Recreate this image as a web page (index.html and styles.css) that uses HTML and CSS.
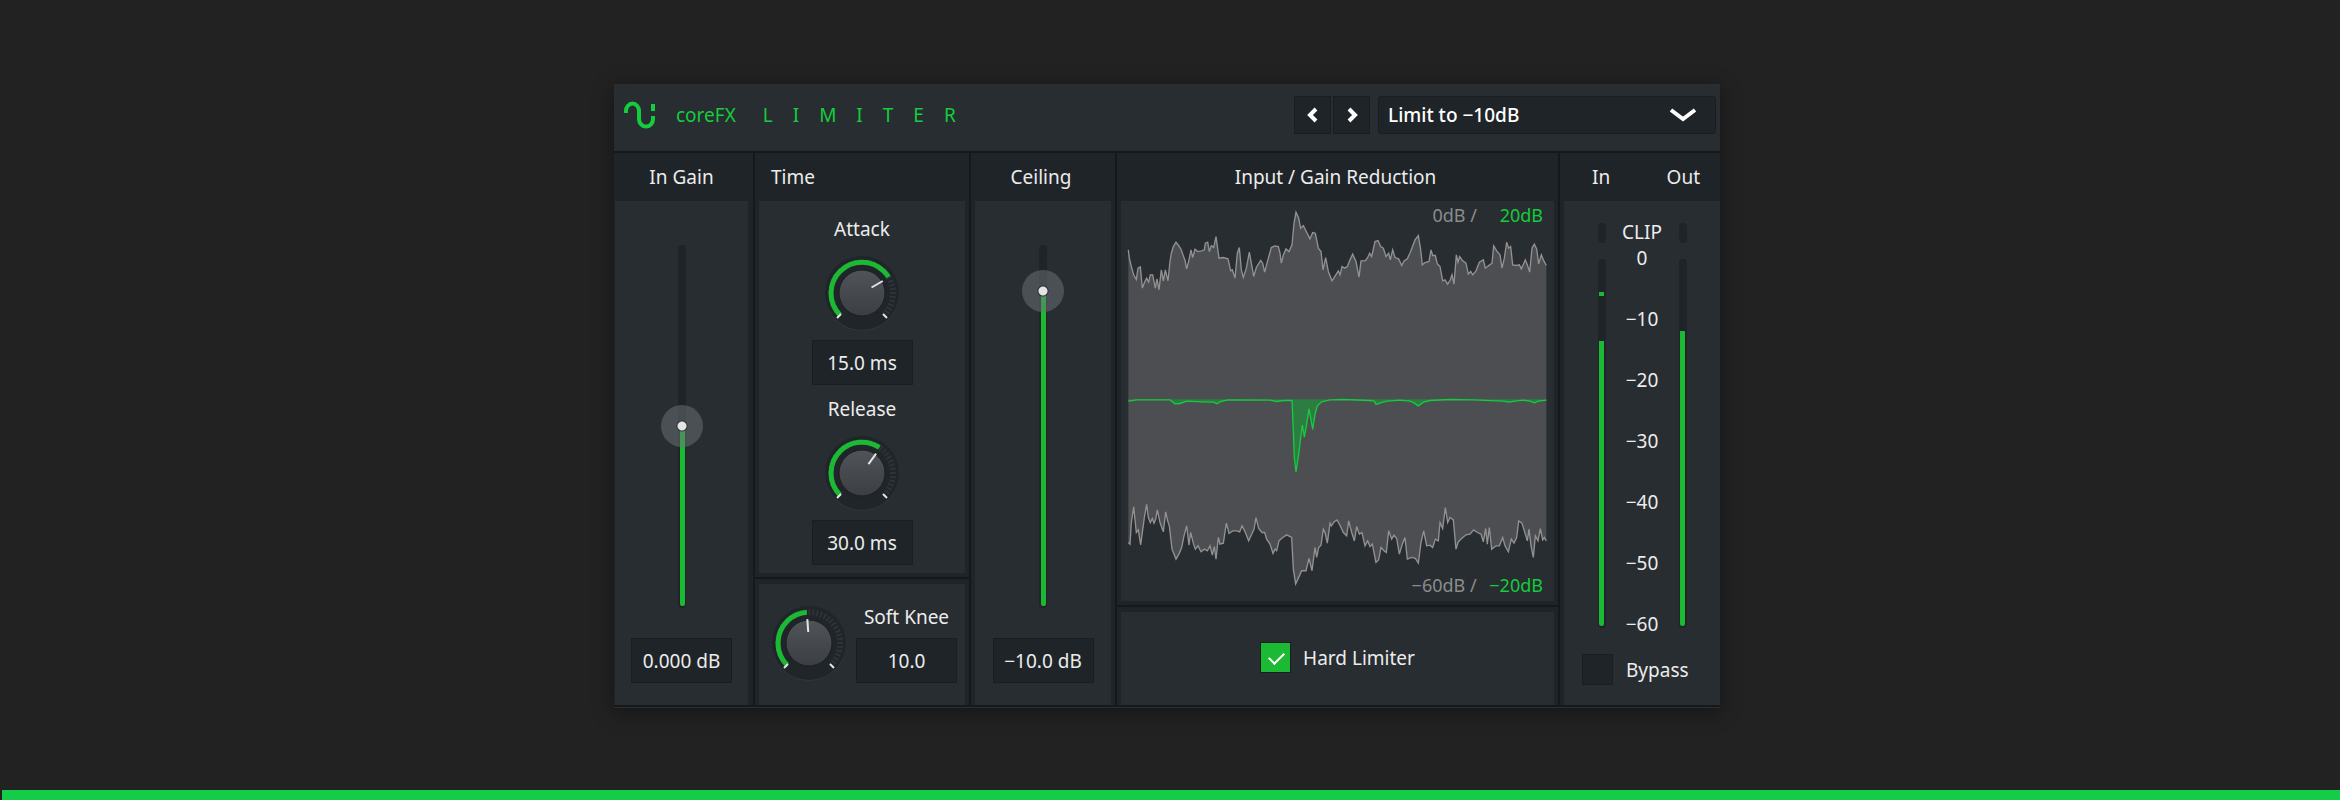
FILE: index.html
```html
<!DOCTYPE html>
<html lang="en">
  <head>
    <meta charset="UTF-8" />
    <meta name="viewport" content="width=device-width, initial-scale=1.0" />
    <title>coreFX Limiter</title>
    <link rel="stylesheet" href="styles.css">
  </head>
  <body>
    <main class="stage">
      <div class="plugin">
        <header class="topbar">
          <svg class="logo" viewBox="0 0 32 28" width="32" height="28">
            <path d="M2 12V10a6.500 7.500 0 0 1 13 0V18a7 7.500 0 0 0 14 0V15M29 3V10" />
          </svg>
          <h1 class="brand">coreFX <span class="brand-name">LIMITER</span></h1>
          <div class="presets">
            <button type="button" class="step" aria-label="Previous preset">
              <svg viewBox="0 0 12 16" width="12" height="16"><path d="M9 2L3 8l6 6" /></svg>
            </button>
            <button type="button" class="step" aria-label="Next preset">
              <svg viewBox="0 0 12 16" width="12" height="16"><path d="M3 2l6 6-6 6" /></svg>
            </button>
            <div class="preset-select">
              <select aria-label="Preset">
                <option>Limit to −10dB</option>
              </select>
              <svg viewBox="0 0 28 14" width="28" height="14"><path d="M2 2l12 9L26 2" /></svg>
            </div>
          </div>
        </header>

        <div class="columns">
          <!-- In Gain -->
          <section class="column">
            <h2 class="column-title"><label for="gain">In Gain</label></h2>
            <div class="pane fader">
              <input type="range" id="gain" class="fader-slider" min="-24" max="24" step="any" value="0" style="--fill: 50%" />
              <input type="text" class="value" aria-label="In Gain value" value="0.000 dB" />
            </div>
          </section>

          <!-- Time -->
          <section class="column">
            <h2 class="column-title column-title-left">Time</h2>
            <div class="pane times">
              <label for="attack">Attack</label>
              <div class="knob">
                <svg viewBox="-38 -38 76 76" width="76" height="76">
                  <defs>
                    <linearGradient id="cap" x1="0" y1="0" x2="0" y2="1">
                      <stop offset="0" stop-color="#505458" />
                      <stop offset="1" stop-color="#3b3f43" />
                    </linearGradient>
                  </defs>
                  <circle class="knob-lip" cy="1" r="37" />
                  <circle class="knob-well" r="37" />
                  <path class="knob-rest" d="M-22 22A31 31 0 1 1 22 22" />
                  <path class="knob-arc" pathLength="270" stroke-dasharray="194 400" d="M-22 22A31 31 0 1 1 22 22" />
                  <circle class="knob-cap" r="23" />
                  <path class="knob-tick" d="M-21 21l-4 4M21 21l4 4" />
                  <path class="knob-pointer" transform="rotate(60)" d="M0-11V-24" />
                </svg>
                <input type="range" id="attack" min="0" max="20.8" step="any" value="15" />
              </div>
              <input type="text" class="value" aria-label="Attack value" value="15.0 ms" />
              <label for="release" class="times-second">Release</label>
              <div class="knob">
                <svg viewBox="-38 -38 76 76" width="76" height="76">
                  <circle class="knob-lip" cy="1" r="37" />
                  <circle class="knob-well" r="37" />
                  <path class="knob-rest" d="M-22 22A31 31 0 1 1 22 22" />
                  <path class="knob-arc" pathLength="270" stroke-dasharray="169 400" d="M-22 22A31 31 0 1 1 22 22" />
                  <circle class="knob-cap" r="23" />
                  <path class="knob-tick" d="M-21 21l-4 4M21 21l4 4" />
                  <path class="knob-pointer" transform="rotate(36)" d="M0-11V-24" />
                </svg>
                <input type="range" id="release" min="0" max="48" step="any" value="30" />
              </div>
              <input type="text" class="value" aria-label="Release value" value="30.0 ms" />
            </div>
            <div class="pane knee">
              <div class="knob">
                <svg viewBox="-38 -38 76 76" width="76" height="76">
                  <circle class="knob-lip" cy="1" r="37" />
                  <circle class="knob-well" r="37" />
                  <path class="knob-rest" d="M-22 22A31 31 0 1 1 22 22" />
                  <path class="knob-arc" pathLength="270" stroke-dasharray="131 400" d="M-22 22A31 31 0 1 1 22 22" />
                  <circle class="knob-cap" r="23" />
                  <path class="knob-tick" d="M-21 21l-4 4M21 21l4 4" />
                  <path class="knob-pointer" transform="rotate(-4)" d="M0-11V-24" />
                </svg>
                <input type="range" id="knee" min="0" max="20.6" step="any" value="10" />
              </div>
              <div class="knee-value">
                <label for="knee">Soft Knee</label>
                <input type="text" class="value" aria-label="Soft Knee value" value="10.0" />
              </div>
            </div>
          </section>

          <!-- Ceiling -->
          <section class="column">
            <h2 class="column-title"><label for="ceiling">Ceiling</label></h2>
            <div class="pane fader">
              <input type="range" id="ceiling" class="fader-slider" min="-60" max="-6" step="any" value="-10" style="--fill: 87%" />
              <input type="text" class="value" aria-label="Ceiling value" value="−10.0 dB" />
            </div>
          </section>

          <!-- Graph -->
          <section class="column">
            <h2 class="column-title">Input / Gain Reduction</h2>
            <div class="pane graph">
              <svg class="wave" viewBox="33 18 1299 1203" preserveAspectRatio="none">
                <path class="wave-fill" d="M55 165L58 190 64 215 71 240 79 254 84 220 91 216 97 280 104 262 110 250 116 262 121 240 128 240 136 280 141 252 147 285 154 225 160 258 166 225 174 258 180 200 184 175 190 155 198 142 206 152 213 163 219 180 225 197 230 222 237 195 243 165 248 188 255 163 263 170 275 168 283 165 286 145 293 142 298 170 304 152 311 158 318 125 327 190 340 188 354 192 362 228 367 225 375 250 382 175 388 158 394 225 400 248 409 220 418 172 424 205 431 245 439 218 452 197 458 205 464 232 475 190 484 158 494 153 505 155 510 175 514 205 520 180 528 162 537 170 546 150 552 85 558 52 566 70 572 100 580 92 590 112 600 132 608 113 616 115 625 160 633 170 639 225 647 188 655 230 666 258 675 244 685 228 690 240 696 215 704 220 712 215 720 195 728 178 738 200 747 247 753 198 765 198 772 190 779 175 785 185 795 140 804 137 812 155 820 160 828 185 836 175 841 195 848 165 855 188 866 192 875 212 882 198 892 192 901 172 915 135 925 122 932 165 937 210 945 203 957 200 963 165 968 182 976 182 982 207 990 215 998 258 1005 255 1013 268 1021 255 1026 240 1032 268 1039 180 1044 202 1049 185 1058 198 1068 205 1075 238 1082 230 1088 240 1098 228 1108 202 1120 195 1126 220 1135 213 1146 205 1151 153 1160 168 1170 180 1176 220 1183 190 1190 142 1196 160 1202 155 1208 210 1220 212 1228 210 1234 222 1246 195 1252 210 1259 232 1266 160 1273 148 1280 162 1286 207 1294 180 1300 195 1309 212V620H55Z" />
                <path class="wave-fill" d="M55 1045L60 1050 64 985 71 938 79 1015 85 1007 92 1052 103 970 110 930 115 970 121 985 127 973 132 987 137 975 142 947 150 985 160 1013 167 953 173 980 178 995 186 1065 192 1080 198 1095 208 1077 215 1060 222 1025 230 995 237 1053 242 1015 250 1047 256 1065 264 1055 273 1073 283 1065 292 1070 300 1055 307 1083 313 1057 318 1095 325 1030 330 1050 340 1047 349 987 357 1018 368 1010 380 1010 389 1013 396 995 404 1010 416 1040 425 1020 432 1005 438 970 446 1003 456 1015 464 1015 470 1035 480 1050 489 1078 495 1065 500 1070 507 1040 518 1030 530 1022 545 1030 550 1125 557 1170 566 1150 575 1130 588 1130 597 1093 606 1130 615 1060 620 1090 626 1060 633 1053 640 1005 645 1015 652 1047 660 987 664 995 672 983 681 977 690 993 700 1015 710 1025 716 980 725 1015 733 1040 740 997 748 1020 756 1015 765 1055 773 1040 780 1057 787 1050 798 1105 806 1097 813 1060 822 1070 829 1075 836 1010 845 1035 852 1023 860 1033 868 1080 877 1050 885 1030 892 1095 905 1090 916 1093 925 1107 933 1045 941 1010 950 1055 960 1053 968 1060 976 1035 985 1040 990 985 998 1003 1006 940 1013 985 1020 970 1030 977 1038 1065 1045 1043 1055 1033 1068 1022 1080 1020 1091 1007 1102 1015 1113 1020 1120 1043 1127 1003 1132 1050 1138 1000 1145 1065 1158 1055 1168 1055 1178 1030 1185 1055 1195 1073 1204 1035 1212 1047 1220 1030 1226 980 1236 987 1243 1010 1252 1040 1257 1005 1263 1055 1270 1090 1276 1025 1284 1040 1291 1003 1298 1037 1303 1030 1309 1040V618H55Z" />
                <path class="wave-line" d="M55 165L58 190 64 215 71 240 79 254 84 220 91 216 97 280 104 262 110 250 116 262 121 240 128 240 136 280 141 252 147 285 154 225 160 258 166 225 174 258 180 200 184 175 190 155 198 142 206 152 213 163 219 180 225 197 230 222 237 195 243 165 248 188 255 163 263 170 275 168 283 165 286 145 293 142 298 170 304 152 311 158 318 125 327 190 340 188 354 192 362 228 367 225 375 250 382 175 388 158 394 225 400 248 409 220 418 172 424 205 431 245 439 218 452 197 458 205 464 232 475 190 484 158 494 153 505 155 510 175 514 205 520 180 528 162 537 170 546 150 552 85 558 52 566 70 572 100 580 92 590 112 600 132 608 113 616 115 625 160 633 170 639 225 647 188 655 230 666 258 675 244 685 228 690 240 696 215 704 220 712 215 720 195 728 178 738 200 747 247 753 198 765 198 772 190 779 175 785 185 795 140 804 137 812 155 820 160 828 185 836 175 841 195 848 165 855 188 866 192 875 212 882 198 892 192 901 172 915 135 925 122 932 165 937 210 945 203 957 200 963 165 968 182 976 182 982 207 990 215 998 258 1005 255 1013 268 1021 255 1026 240 1032 268 1039 180 1044 202 1049 185 1058 198 1068 205 1075 238 1082 230 1088 240 1098 228 1108 202 1120 195 1126 220 1135 213 1146 205 1151 153 1160 168 1170 180 1176 220 1183 190 1190 142 1196 160 1202 155 1208 210 1220 212 1228 210 1234 222 1246 195 1252 210 1259 232 1266 160 1273 148 1280 162 1286 207 1294 180 1300 195 1309 212" />
                <path class="wave-line" d="M55 1045L60 1050 64 985 71 938 79 1015 85 1007 92 1052 103 970 110 930 115 970 121 985 127 973 132 987 137 975 142 947 150 985 160 1013 167 953 173 980 178 995 186 1065 192 1080 198 1095 208 1077 215 1060 222 1025 230 995 237 1053 242 1015 250 1047 256 1065 264 1055 273 1073 283 1065 292 1070 300 1055 307 1083 313 1057 318 1095 325 1030 330 1050 340 1047 349 987 357 1018 368 1010 380 1010 389 1013 396 995 404 1010 416 1040 425 1020 432 1005 438 970 446 1003 456 1015 464 1015 470 1035 480 1050 489 1078 495 1065 500 1070 507 1040 518 1030 530 1022 545 1030 550 1125 557 1170 566 1150 575 1130 588 1130 597 1093 606 1130 615 1060 620 1090 626 1060 633 1053 640 1005 645 1015 652 1047 660 987 664 995 672 983 681 977 690 993 700 1015 710 1025 716 980 725 1015 733 1040 740 997 748 1020 756 1015 765 1055 773 1040 780 1057 787 1050 798 1105 806 1097 813 1060 822 1070 829 1075 836 1010 845 1035 852 1023 860 1033 868 1080 877 1050 885 1030 892 1095 905 1090 916 1093 925 1107 933 1045 941 1010 950 1055 960 1053 968 1060 976 1035 985 1040 990 985 998 1003 1006 940 1013 985 1020 970 1030 977 1038 1065 1045 1043 1055 1033 1068 1022 1080 1020 1091 1007 1102 1015 1113 1020 1120 1043 1127 1003 1132 1050 1138 1000 1145 1065 1158 1055 1168 1055 1178 1030 1185 1055 1195 1073 1204 1035 1212 1047 1220 1030 1226 980 1236 987 1243 1010 1252 1040 1257 1005 1263 1055 1270 1090 1276 1025 1284 1040 1291 1003 1298 1037 1303 1030 1309 1040" />
                <path class="reduction-fill" d="M55 614V620L80 616 180 616 195 628 210 627 230 620 275 622 310 623 321 628 332 621 355 616 480 617 500 621 520 618 546 618 550 710 553 790 558 833 566 780 572 730 577 692 583 728 590 690 597 643 602 670 608 705 615 660 622 634 635 622 660 616 700 615 780 618 793 620 798 630 812 625 830 620 870 617 900 620 912 625 925 634 940 623 960 618 1020 615 1090 616 1180 620 1197 623 1215 620 1240 617 1260 620 1273 625 1285 620 1309 617V614Z" />
                <path class="reduction-line" d="M55 620L80 616 180 616 195 628 210 627 230 620 275 622 310 623 321 628 332 621 355 616 480 617 500 621 520 618 546 618 550 710 553 790 558 833 566 780 572 730 577 692 583 728 590 690 597 643 602 670 608 705 615 660 622 634 635 622 660 616 700 615 780 618 793 620 798 630 812 625 830 620 870 617 900 620 912 625 925 634 940 623 960 618 1020 615 1090 616 1180 620 1197 623 1215 620 1240 617 1260 620 1273 625 1285 620 1309 617" />
              </svg>
              <p class="range range-top">0dB / <span>20dB</span></p>
              <p class="range range-bottom">−60dB / <span>−20dB</span></p>
            </div>
            <div class="pane hard">
              <input type="checkbox" id="hard" class="check" checked />
              <label for="hard">Hard Limiter</label>
            </div>
          </section>

          <!-- Meters -->
          <section class="column">
            <h2 class="column-title meter-titles"><span>In</span><span>Out</span></h2>
            <div class="pane levels">
              <div class="meters">
                <div class="meter">
                  <div class="clip"></div>
                  <div class="bar">
                    <div class="peak" style="bottom: 90%"></div>
                    <div class="level" style="height: 78%"></div>
                  </div>
                </div>
                <div class="scale">
                  <span class="scale-clip">CLIP</span>
                  <span>0</span>
                  <span>−10</span>
                  <span>−20</span>
                  <span>−30</span>
                  <span>−40</span>
                  <span>−50</span>
                  <span>−60</span>
                </div>
                <div class="meter">
                  <div class="clip"></div>
                  <div class="bar">
                    <div class="level" style="height: 80.500%"></div>
                  </div>
                </div>
              </div>
              <div class="bypass">
                <input type="checkbox" id="bypass" class="check" />
                <label for="bypass">Bypass</label>
              </div>
            </div>
          </section>
        </div>
      </div>
    </main>
    <div class="strip"></div>
  </body>
</html>
```
FILE: styles.css
```css
* {
  margin: 0;
  padding: 0;
  box-sizing: border-box;
}

:root {
  --green: #1bb934;
  --bright: #14cc3c;
  --panel: #282d31;
  --dark: #1f2428;
  --line: #15191c;
  --text: #ececec;
}

body {
  font-family: 'Noto Sans', sans-serif;
  font-size: 19px;
  line-height: 24px;
  background: #222;
  color: var(--text);
  min-height: 100vh;
  display: flex;
  flex-direction: column;
}

.stage {
  flex: 1;
  display: flex;
  justify-content: center;
  align-items: center;
  padding: 2px 6px 0 0;
}

.strip {
  height: 10px;
  margin-left: 2px;
  background: #14cc48;
}

.plugin {
  width: 100%;
  max-width: 1106px;
  background: var(--line);
  box-shadow: 0 4px 20px rgba(0, 0, 0, 0.4);
}

/* Top bar */
.topbar {
  display: flex;
  align-items: center;
  padding: 12px 4px 17px 10px;
  background: var(--panel);
}

.logo {
  fill: none;
  stroke: var(--bright);
  stroke-width: 4;
}

.brand {
  margin-left: 20px;
  font-size: 19px;
  font-weight: 400;
  color: var(--bright);
}

.brand-name {
  margin-left: 22px;
  letter-spacing: 20px;
}

.presets {
  display: flex;
  margin-left: auto;
  gap: 2px;
}

.step {
  display: flex;
  justify-content: center;
  align-items: center;
  width: 37px;
  height: 38px;
  border: 1px solid #1a1e21;
  background: var(--dark);
  cursor: pointer;
}

.step svg,
.preset-select svg {
  fill: none;
  stroke: #fff;
  stroke-width: 4;
}

.preset-select {
  position: relative;
  width: 338px;
  margin-left: 6px;
}

.preset-select select {
  appearance: none;
  width: 100%;
  height: 38px;
  padding: 0 48px 0 9px;
  border: 1px solid #1a1e21;
  border-radius: 3px;
  background: var(--dark);
  color: #fff;
  font: inherit;
  font-weight: 500;
}

.preset-select svg {
  position: absolute;
  top: 12px;
  right: 19px;
  pointer-events: none;
}

/* Columns */
.columns {
  display: grid;
  grid-template-columns: 139fr 214fr 144fr 441fr 160fr;
  gap: 2px;
  padding: 2px 0;
  border-bottom: 1px solid #2a2f33;
}

.column {
  display: flex;
  flex-direction: column;
  min-width: 0;
  background: var(--dark);
}

.column-title {
  padding: 12px 4px 12px 0;
  font-size: 19px;
  font-weight: 400;
  text-align: center;
}

.column-title-left {
  padding-left: 16px;
  text-align: left;
}

.pane {
  flex: 1;
  margin: 0 4px;
  background: var(--panel);
}

.column:first-child .pane {
  margin: 0 5px 0 1px;
}

.column:last-child .pane {
  margin-right: 0;
}

.pane + .pane {
  position: relative;
  flex: none;
  margin-top: 11px;
}

/* divider between two stacked panes */
.pane + .pane::before {
  content: '';
  position: absolute;
  top: -7px;
  left: -4px;
  right: -4px;
  height: 2px;
  background: var(--line);
}

.value {
  width: 101px;
  height: 45px;
  border: 1px solid #1a1e21;
  background: var(--dark);
  color: var(--text);
  font: inherit;
  text-align: center;
}

/* Faders */
.fader {
  display: flex;
  flex-direction: column;
  align-items: center;
  gap: 30px;
  padding: 44px 0 22px;
}

.fader-slider {
  appearance: none;
  writing-mode: vertical-lr;
  direction: rtl;
  width: 42px;
  height: 363px;
  background: none;
}

.fader-slider::-webkit-slider-runnable-track {
  width: 8px;
  height: 363px;
  margin: 0 17px;
  border-radius: 4px;
  border: solid var(--dark);
  border-width: 1px 1px 2px 2px;
  background: linear-gradient(to top, var(--green) var(--fill), var(--dark) var(--fill));
}

.fader-slider::-webkit-slider-thumb {
  appearance: none;
  width: 42px;
  height: 42px;
  margin-left: -19px;
  border-radius: 50%;
  background: radial-gradient(circle, #e4e4e4 4px, #2c3134 5px, rgba(110, 115, 122, 0.5) 6px);
}

/* Knobs */
.times {
  display: flex;
  flex-direction: column;
  align-items: center;
  padding: 16px 0 8px;
}

.times .knob {
  margin: 14px 0 9px;
}

.times-second {
  margin-top: 12px;
}

.knob {
  position: relative;
  width: 76px;
  height: 76px;
}

.knob svg {
  display: block;
}

.knob input {
  position: absolute;
  inset: 0;
  width: 100%;
  height: 100%;
  opacity: 0;
  cursor: pointer;
}

.knob-lip {
  fill: #32373b;
}

.knob-well {
  fill: #202529;
}

.knob-rest {
  fill: none;
  stroke: #2e3337;
  stroke-width: 6;
  stroke-dasharray: 2 2;
}

.knob-arc {
  fill: none;
  stroke: var(--green);
  stroke-width: 5;
}

.knob-cap {
  fill: url(#cap);
  stroke: #1b1f22;
}

.knob-tick,
.knob-pointer {
  stroke: #e4e4e4;
  stroke-width: 2;
}

.knee {
  display: flex;
  gap: 9px;
  padding: 21px 0 22px 12px;
}

.knee-value {
  display: flex;
  flex-direction: column;
  align-items: center;
  gap: 9px;
}

/* Graph */
.graph {
  position: relative;
}

.wave {
  position: absolute;
  width: 100%;
  height: 100%;
}

.wave-fill {
  fill: #4d4e51;
}

.wave-line,
.reduction-line {
  fill: none;
  stroke: #929292;
  stroke-width: 4;
}

.reduction-line {
  stroke: var(--bright);
}

.reduction-fill {
  fill: rgba(27, 150, 60, 0.65);
}

.range {
  position: absolute;
  right: 11px;
  font-size: 18px;
  color: #8c8c8c;
}

.range span {
  color: var(--bright);
}

.range-top {
  top: 2px;
}

.range-bottom {
  bottom: 4px;
}

.range-top span {
  margin-left: 18px;
}

.range-bottom span {
  margin-left: 8px;
}

.hard {
  display: flex;
  align-items: center;
  justify-content: center;
  gap: 12px;
  padding: 30px 0 32px;
}

.check {
  appearance: none;
  width: 31px;
  height: 31px;
  border: 1px solid #1a1e21;
  background: var(--dark);
}

.check:checked {
  background: var(--green);
}

.check:checked::before {
  content: '';
  display: block;
  width: 13px;
  height: 7px;
  margin: 9px 8px;
  border: solid #fff;
  border-width: 0 0 2px 2px;
  transform: rotate(-45deg);
}

/* Meters */
.meter-titles {
  display: flex;
  justify-content: space-between;
  padding: 12px 20px 12px 32px;
}

.levels {
  padding-top: 19px;
}

.meters {
  display: flex;
  justify-content: center;
  gap: 12px;
}

.meter {
  display: flex;
  flex-direction: column;
  gap: 16px;
  width: 8px;
  padding-top: 3px;
}

.clip {
  height: 20px;
  border-radius: 4px;
  background: var(--dark);
}

.bar {
  position: relative;
  display: flex;
  flex: 1;
  align-items: flex-end;
  margin-bottom: 8px;
  padding: 1px 2px 2px 1px;
  border-radius: 4px;
  background: var(--dark);
}

.level {
  width: 100%;
  border-radius: 0 0 3px 3px;
  background: var(--green);
}

.peak {
  position: absolute;
  left: 1px;
  right: 2px;
  height: 4px;
  background: var(--green);
}

.scale {
  display: flex;
  flex-direction: column;
  align-items: center;
  gap: 37px;
  width: 49px;
}

.scale-clip {
  margin-bottom: -35px;
}

.bypass {
  display: flex;
  align-items: center;
  gap: 13px;
  padding: 18px 0 20px 18px;
}
```
